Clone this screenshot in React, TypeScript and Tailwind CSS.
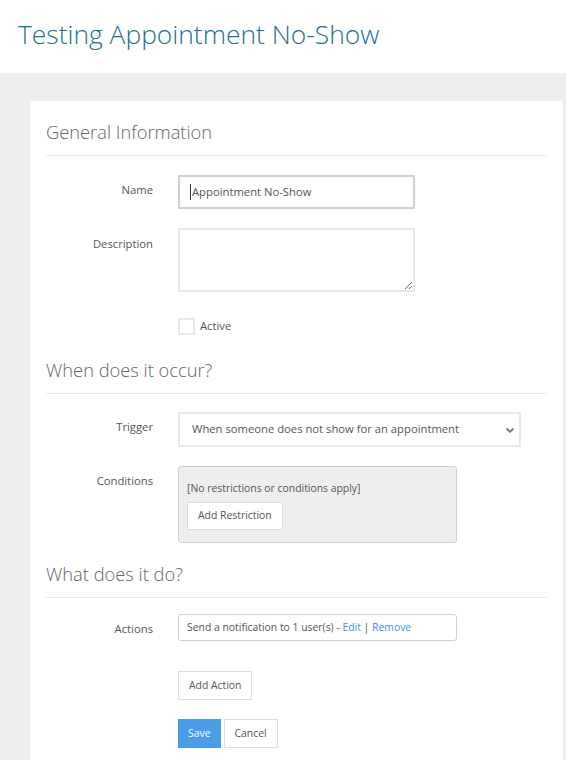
import React from "react";

const Row = ({ label, children, labelClass = "pt-[6px]" }: { label: string; children: React.ReactNode; labelClass?: string }) => (
  <div className="flex">
    <div className={`w-[107px] shrink-0 text-right text-[11.25px] text-[#555] ${labelClass}`}>{label}</div>
    <div className="ml-[25px] flex-1">{children}</div>
  </div>
);

const SectionTitle = ({ title }: { title: string }) => (
  <div className="border-b border-[#e8e8e8] pb-[10px]">
    <h2 className="text-[18.3px] font-light leading-[26px] text-[#666]">{title}</h2>
  </div>
);

const App = () => {
  return (
    <div className="min-h-[760px] bg-[#efefef] font-['Open_Sans',sans-serif]">
      <div className="h-[73px] bg-white pl-[18px] pt-[16px]">
        <h1 className="text-[26.4px] font-light leading-[36px] text-[#1f6e94]">Testing Appointment No-Show</h1>
      </div>
      <div className="ml-[30px] mr-[3px] mt-[28px] bg-white px-[16px] pt-[18px] pb-[20px]">
        <SectionTitle title="General Information" />

        <div className="mt-[19px] flex flex-col gap-[19px] pr-[100px]">
          <Row label="Name" labelClass="pt-[7px]">
            <div className="flex h-[34px] w-[237px] items-center border-2 border-[#d0d0d0] px-[10px] text-[11.25px] text-[#555]">
              <span className="mr-[1px] inline-block h-[16px] w-px bg-[#333]" />
              Appointment No-Show
            </div>
          </Row>
          <Row label="Description" labelClass="pt-[8px]">
            <textarea className="block h-[64px] w-[237px] border-2 border-[#e8e8e8] outline-none" />
          </Row>
        </div>

        <div className="mt-[26px] ml-[132px] flex items-center gap-[5px]">
          <span className="h-[17px] w-[17px] border-2 border-[#e8e8e8]" />
          <span className="text-[11.25px] text-[#555]">Active</span>
        </div>

        <div className="mt-[22px]">
          <SectionTitle title="When does it occur?" />
        </div>

        <div className="mt-[18px] flex flex-col gap-[19px]">
          <Row label="Trigger" labelClass="pt-[7px]">
            <div className="flex h-[35px] w-[343px] items-center justify-between border-2 border-[#e8e8e8] pl-[12px] pr-[3px] text-[11.25px] text-[#555]">
              <span>When someone does not show for an appointment</span>
              <svg width="12" height="12" viewBox="0 0 12 12" fill="none" stroke="#777" strokeWidth="1.8">
                <path d="M2.5 4.5 6 7.8l3.5-3.3" />
              </svg>
            </div>
          </Row>
          <Row label="Conditions" labelClass="pt-[7px]">
            <div className="w-[279px] rounded-[3px] border border-[#cfcfcf] bg-[#eeeeee] px-[8px] pt-[14px] pb-[12px]">
              <div className="text-[10.4px] leading-[14px] text-[#555]">[No restrictions or conditions apply]</div>
              <div className="mt-[7px] inline-flex h-[28px] items-center border border-[#ddd] bg-white px-[10px] text-[10.4px] text-[#555]">
                Add Restriction
              </div>
            </div>
          </Row>
        </div>

        <div className="mt-[18px]">
          <SectionTitle title="What does it do?" />
        </div>

        <div className="mt-[16px]">
          <Row label="Actions" labelClass="pt-[7px]">
            <div className="flex h-[27px] w-[279px] items-center rounded-[3px] border border-[#cfcfcf] px-[8px] text-[10.4px] text-[#555]">
              Send a notification to 1 user(s) -&nbsp;<span className="text-[#3d8ee8]">Edit</span>&nbsp;|&nbsp;<span className="text-[#3d8ee8]">Remove</span>
            </div>
          </Row>
        </div>

        <div className="ml-[132px] mt-[30px] flex flex-col items-start gap-[19px]">
          <div className="flex h-[29px] items-center border border-[#ddd] px-[10px] text-[10.4px] text-[#555]">Add Action</div>
          <div className="flex gap-[3px]">
            <div className="flex h-[29px] items-center bg-[#4a9be8] px-[10px] text-[10.4px] text-white">Save</div>
            <div className="flex h-[29px] items-center border border-[#ddd] px-[10px] text-[10.4px] text-[#555]">Cancel</div>
          </div>
        </div>
      </div>
    </div>
  );
};

export default App;
